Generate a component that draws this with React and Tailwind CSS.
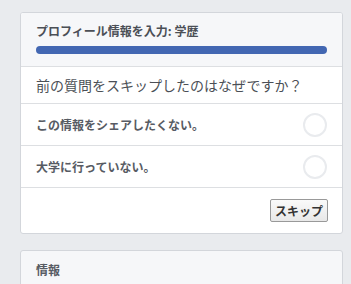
import React from "react";

const options = ["この情報をシェアしたくない。", "大学に行っていない。"];

const App = () => {
  return (
    <div
      className="w-[351px] h-[284px] overflow-hidden bg-[#e9ebee] pt-[12px] pl-[20px] pr-[8px]"
      style={{ fontFamily: '"Noto Sans CJK JP", "Noto Sans", sans-serif' }}
    >
      <div className="border border-[#d3d6db] rounded-[3px] bg-white overflow-hidden">
        <div className="bg-[#f6f7f9] border-b border-[#dddfe2] px-[15px] pt-[10px] pb-[12px]">
          <div className="text-[12px] font-bold text-[#4b4f56] leading-[16px]">
            プロフィール情報を入力: 学歴
          </div>
          <div className="mt-[7px] h-[8px] rounded-full bg-[#4267b2]" />
        </div>
        <div className="px-[15px] h-[37px] flex items-center border-b border-[#dddfe2] text-[14px] text-[#4b4f56]">
          前の質問をスキップしたのはなぜですか？
        </div>
        {options.map((o) => (
          <div
            key={o}
            className="px-[15px] h-[42px] flex items-center justify-between border-b border-[#dddfe2]"
          >
            <span className="text-[12px] font-bold text-[#575b63]">{o}</span>
            <span className="w-[24px] h-[24px] rounded-full border-2 border-[#e9ebee]" />
          </div>
        ))}
        <div className="h-[45px] flex items-center justify-end px-[14px]">
          <button className="h-[23px] w-[58px] border border-[#999] rounded-[2px] bg-gradient-to-b from-[#fafafa] to-[#e8e8e8] text-[12px] font-bold text-[#333]">
            スキップ
          </button>
        </div>
      </div>
      <div className="mt-[16px] border border-[#d3d6db] rounded-[3px] bg-[#f6f7f9] px-[15px] pt-[10px] h-[60px]">
        <div className="text-[12px] font-bold text-[#575b63]">情報</div>
      </div>
    </div>
  );
};

export default App;
